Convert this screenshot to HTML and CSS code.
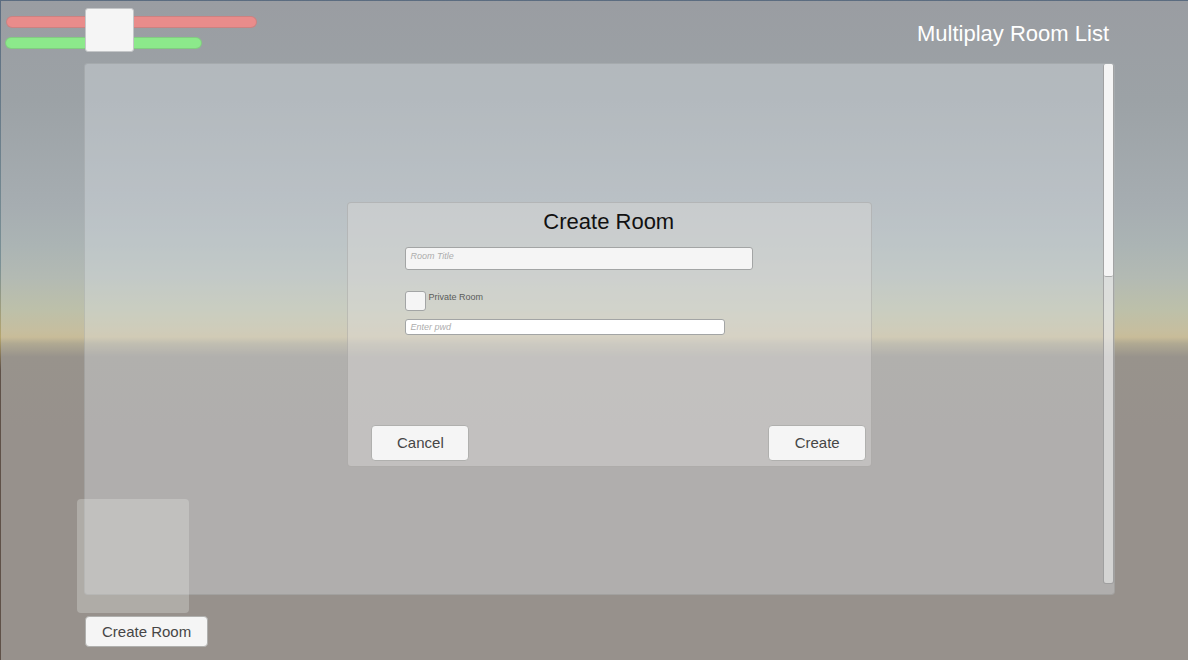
FILE: index.html
```html
<!DOCTYPE html>
<html lang="en">
<head>
<meta charset="utf-8">
<meta name="viewport" content="width=device-width, initial-scale=1">
<title>Multiplay Room List</title>
<link rel="stylesheet" href="styles.css">
</head>
<body>
<div class="screen">
  <header class="header">
    <div class="hud">
      <div class="bar bar-health"></div>
      <div class="bar bar-stamina"></div>
      <div class="avatar"></div>
    </div>
    <h1 class="screen-title">Multiplay Room List</h1>
  </header>
  <main class="room-list">
    <div class="scrollbar"><div class="scroll-thumb"></div></div>
    <form class="dialog">
      <h2 class="dialog-title">Create Room</h2>
      <div class="fields">
        <input class="field room-name" type="text" placeholder="Room Title" aria-label="Room Title">
        <div class="private">
          <input class="check" type="checkbox" id="private-room">
          <label class="check-label" for="private-room">Private Room</label>
        </div>
        <input class="field room-password" type="password" placeholder="Enter pwd" aria-label="Enter pwd">
      </div>
      <div class="actions">
        <button class="button action" type="button">Cancel</button>
        <button class="button action" type="button">Create</button>
      </div>
    </form>
    <div class="preview"></div>
  </main>
  <footer class="footer">
    <button class="button create-room" type="button">Create Room</button>
  </footer>
</div>
</body>
</html>
```
FILE: styles.css
```css
* { box-sizing: border-box; }

body {
  margin: 0;
  font-family: "Liberation Sans", Arial, sans-serif;
}

.screen {
  display: flex;
  flex-direction: column;
  min-height: 100vh;
  border-top: 1px solid #62707f;
  border-left: 1px solid;
  border-image: linear-gradient(#5b6c80 0%, #7b9196 40%, #b5a56e 51%, #5f5148 56%, #5f5148 100%) 1;
  background: linear-gradient(
    #9a9da2 0%,
    #9ca2a6 15%,
    #a6adb1 31%,
    #abb4b4 37%,
    #b3bab3 42%,
    #bdc0a9 47%,
    #c6be9f 50%,
    #c8bc99 51%,
    #b0a992 52%,
    #98938c 54%,
    #97918c 65%,
    #97918c 100%
  );
}

.header {
  display: flex;
  justify-content: space-between;
  height: 62px;
  padding: 15px 79px 0 4px;
}

.hud {
  position: relative;
  width: 252px;
}

.bar {
  height: 12px;
  border: 1px solid rgba(90, 90, 90, 0.2);
  border-radius: 6px;
}

.bar-health {
  width: 251px;
  margin: 0 0 9px 1px;
  background: #e98c8b;
}

.bar-stamina {
  width: 197px;
  background: #8ce98b;
}

.avatar {
  position: absolute;
  top: -8px;
  left: 80px;
  width: 49px;
  height: 44px;
  border: 1px solid #c4c6c8;
  border-radius: 3px;
  background: #f5f5f5;
}

.screen-title {
  margin: 4px 0 0;
  color: #fff;
  font-size: 22px;
  font-weight: 400;
  line-height: 28px;
}

.room-list {
  position: relative;
  display: flex;
  flex: 1;
  align-items: stretch;
  justify-content: flex-end;
  margin: 0 73px 0 83px;
  min-height: 480px;
  padding-bottom: 10px;
  border: 1px solid rgba(90, 90, 90, 0.15);
  border-radius: 4px;
  background: rgba(226, 232, 236, 0.34);
}

.scrollbar {
  width: 11px;
  border: 1px solid rgba(80, 80, 80, 0.4);
  border-top: 0;
  border-radius: 3px;
  background: rgba(232, 232, 232, 0.65);
}

.scroll-thumb {
  height: 41%;
  border-bottom: 1px solid #aaacac;
  border-radius: 2px;
  background: #f5f5f5;
}

.dialog {
  position: absolute;
  top: 26%;
  left: 25.5%;
  display: flex;
  flex-direction: column;
  width: 51%;
  height: 265px;
  padding: 5px 5px 5px 23px;
  border: 1px solid rgba(90, 90, 90, 0.2);
  border-radius: 4px;
  background: rgba(222, 221, 218, 0.4);
}

.dialog-title {
  margin: 0 20px 0 0;
  color: #111;
  font-size: 22px;
  font-weight: 400;
  line-height: 28px;
  text-align: center;
}

.fields {
  display: flex;
  flex: 1;
  flex-direction: column;
  padding: 11px 113px 0 34px;
}

.field {
  display: block;
  padding: 0 4px;
  border: 1px solid #a3a5a5;
  border-radius: 3px;
  color: #323232;
  font-family: inherit;
  font-size: 9px;
  font-style: italic;
}

.field::placeholder {
  color: #adadad;
  opacity: 1;
}

.room-name {
  width: 100%;
  height: 23px;
  padding-bottom: 5px;
  background: #f5f5f5;
}

.private {
  display: flex;
  gap: 2px;
  margin: 21px 0 8px;
}

.check {
  appearance: none;
  width: 21px;
  height: 20px;
  margin: 0;
  border: 1px solid #a3a5a5;
  border-radius: 3px;
  background: #f5f5f5;
}

.check:checked {
  background: #666;
}

.check-label {
  color: #5a5c5a;
  font-size: 9px;
  line-height: 12px;
}

.room-password {
  width: 92%;
  height: 16px;
  background: #fff;
}

.actions {
  display: flex;
  justify-content: space-between;
}

.button {
  padding: 0 16px;
  border: 1px solid #b0b0ae;
  border-radius: 4px;
  background: #f5f5f5;
  color: #464646;
  font-family: inherit;
  font-size: 15px;
}

.action {
  width: 98px;
  height: 36px;
}

.preview {
  position: absolute;
  bottom: -19px;
  left: -8px;
  width: 112px;
  height: 114px;
  border-radius: 4px;
  background: rgba(232, 234, 232, 0.3);
}

.footer {
  padding: 21px 84px 13px;
}

.create-room {
  display: block;
  height: 31px;
}
```
